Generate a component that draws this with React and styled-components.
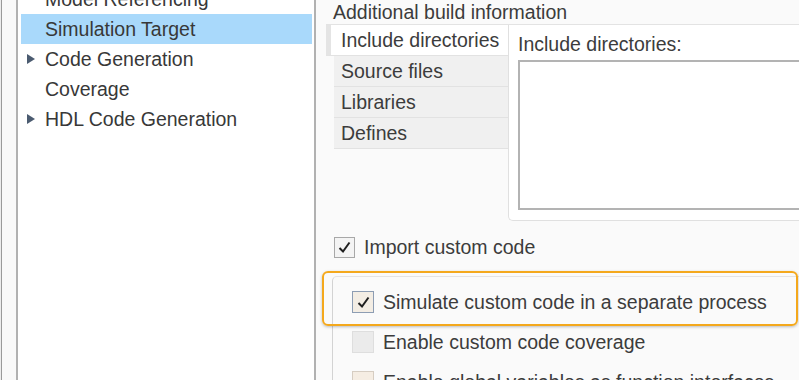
import React from 'react';
import styled, { createGlobalStyle } from 'styled-components';

const GlobalStyle = createGlobalStyle`
  * { box-sizing: border-box; }
  html, body {
    margin: 0;
    padding: 0;
    background: #fafafa;
    font-family: "Liberation Sans", Arial, sans-serif;
  }
`;

const Page = styled.div`
  display: flex;
  width: 799px;
  height: 380px;
  overflow: hidden;
  font-size: 19.5px;
  color: #3c3c3c;
`;

const Gutter = styled.div`
  width: 16px;
  flex: none;
  background: linear-gradient(to right, #ececec 0 1px, #9a9a9a 1px 2px, #f9f9f9 2px);
`;

const TreePanel = styled.div`
  width: 300px;
  flex: none;
  background: #fff;
  border-left: 2px solid #b1b1b1;
  border-right: 2px solid #b1b1b1;
`;

const TreeList = styled.div`
  margin-top: -16px;
`;

const TreeRow = styled.div`
  display: flex;
  align-items: center;
  height: 30px;
  padding-top: 1px;
  margin: 0 2px 0 3px;
  background: ${(p) => (p.$selected ? '#a9d9fb' : 'transparent')};
  color: #383838;
  white-space: nowrap;
`;

const ArrowSlot = styled.span`
  display: flex;
  align-items: center;
  width: 24px;
  height: 100%;
  padding-left: 6px;
  margin-top: -1px;
  flex: none;
`;

const Arrow = styled.span`
  width: 0;
  height: 0;
  border-left: 8px solid #4b5b70;
  border-top: 5px solid transparent;
  border-bottom: 5px solid transparent;
`;

const RightPanel = styled.div`
  flex: 1;
  min-width: 0;
  display: flex;
  flex-direction: column;
  background: #fafafa;
`;

const Title = styled.div`
  margin-left: 17px;
  height: 25px;
  line-height: 24px;
  white-space: nowrap;
`;

const TabArea = styled.div`
  display: flex;
  margin-left: 10px;
  margin-right: -30px;
  border-top: 1px solid #e3e3e3;
`;

const TabList = styled.div`
  width: 182px;
  flex: none;
  display: flex;
  flex-direction: column;
`;

const Tab = styled.div`
  height: 31px;
  line-height: 31px;
  border-bottom: 1px solid #e2e2e2;
  white-space: nowrap;
  overflow: hidden;
  ${(p) =>
    p.$active
      ? `
    background: #fff;
    border-left: 5px solid #e4e4e4;
    padding-left: 10px;
  `
      : `
    background: #f0f0f0;
    margin-left: 8px;
    padding-left: 7px;
  `}
`;

const TabContent = styled.div`
  flex: 1;
  background: #fff;
  border-left: 1px solid #e0e0e0;
  border-bottom: 1px solid #e0e0e0;
  border-bottom-left-radius: 5px;
  padding: 8px 0 10px 9px;
`;

const FieldLabel = styled.div`
  line-height: 22px;
  white-space: nowrap;
`;

const ListBox = styled.div`
  height: 150px;
  margin-top: 5px;
  background: #fff;
  border: 2px solid #b3b3b3;
`;

const CheckRow = styled.div`
  position: relative;
  display: flex;
  align-items: center;
  gap: 9px;
  height: ${(p) => (p.$tall ? '40px' : '22px')};
  white-space: nowrap;
`;

const Label = styled.span`
  padding-top: 1px;
`;

const ImportRow = styled(CheckRow)`
  margin-top: 15px;
  margin-left: 18px;
`;

const Box = styled.span`
  width: ${(p) => p.$size}px;
  height: ${(p) => p.$size}px;
  flex: none;
  display: flex;
  align-items: center;
  justify-content: center;
  background: ${(p) => p.$bg};
  border: 1px solid ${(p) => p.$border};
`;

const SubGroup = styled.div`
  margin-top: 18px;
  margin-left: 16px;
  padding-top: 5px;
  padding-left: 19px;
  border-left: 1px solid #d3d3d3;
  border-top: 1px solid #e4e4e4;
  border-top-left-radius: 5px;
`;

const Highlight = styled.div`
  position: absolute;
  left: -30px;
  top: -11px;
  width: 476px;
  height: 55px;
  border: 2px solid #f4a81c;
  border-radius: 6px;
  box-shadow: 0 1px 3px rgba(0, 0, 0, 0.25);
  pointer-events: none;
`;

const Check = () => (
  <svg width="15" height="15" viewBox="0 0 15 15">
    <path d="M2.5 8 L6 11.5 L12.5 2.5" fill="none" stroke="#1f1f1f" strokeWidth="2" />
  </svg>
);

const CheckBox = ({ size = 22, bg, border, checked }) => (
  <Box $size={size} $bg={bg} $border={border}>
    {checked && <Check />}
  </Box>
);

const tree = [
  { label: 'Model Referencing' },
  { label: 'Simulation Target', selected: true },
  { label: 'Code Generation', arrow: true },
  { label: 'Coverage' },
  { label: 'HDL Code Generation', arrow: true },
];

const tabs = ['Include directories', 'Source files', 'Libraries', 'Defines'];

export default function App() {
  return (
    <>
      <GlobalStyle />
      <Page>
        <Gutter />
        <TreePanel>
          <TreeList>
            {tree.map((item) => (
              <TreeRow key={item.label} $selected={item.selected}>
                <ArrowSlot>{item.arrow && <Arrow />}</ArrowSlot>
                {item.label}
              </TreeRow>
            ))}
          </TreeList>
        </TreePanel>
        <RightPanel>
          <Title>Additional build information</Title>
          <TabArea>
            <TabList>
              {tabs.map((t, i) => (
                <Tab key={t} $active={i === 0}>
                  {t}
                </Tab>
              ))}
            </TabList>
            <TabContent>
              <FieldLabel>Include directories:</FieldLabel>
              <ListBox />
            </TabContent>
          </TabArea>
          <ImportRow>
            <CheckBox size={21} bg="#f4f4f4" border="#a8a8a8" checked />
            <Label>Import custom code</Label>
          </ImportRow>
          <SubGroup>
            <CheckRow $tall>
              <Highlight />
              <CheckBox bg="#f3ede4" border="#8d9db3" checked />
              <Label>Simulate custom code in a separate process</Label>
            </CheckRow>
            <CheckRow $tall>
              <CheckBox bg="#ebebeb" border="#dedede" />
              <Label>Enable custom code coverage</Label>
            </CheckRow>
            <CheckRow $tall>
              <CheckBox bg="#f5ede3" border="#d6cdc2" />
              <Label>Enable global variables as function interfaces</Label>
            </CheckRow>
          </SubGroup>
        </RightPanel>
      </Page>
    </>
  );
}
